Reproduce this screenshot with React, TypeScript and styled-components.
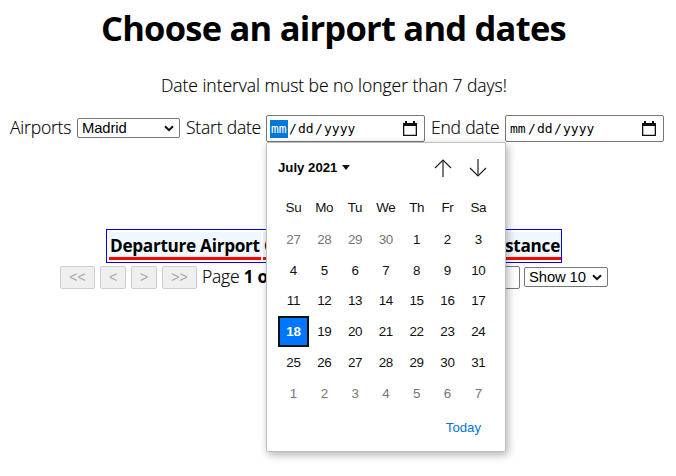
import React from "react";
import styled, { createGlobalStyle } from "styled-components";

const GlobalStyle = createGlobalStyle`
  * { box-sizing: border-box; }
  body {
    margin: 0;
    background: #fff;
    color: #000;
    font-family: "Open Sans", "Noto Sans", sans-serif;
    font-size: 17.5px;
    font-weight: 300;
    -webkit-text-stroke: 0.15px currentColor;
    overflow: hidden;
  }
`;

const Page = styled.main`
  width: 676px;
  height: 476px;
  overflow: hidden;
  white-space: nowrap;
`;

const Title = styled.h1`
  margin: 0;
  padding-left: 101px;
  height: 57px;
  font-size: 34.5px;
  line-height: 55px;
  font-weight: 700;
  letter-spacing: -0.77px;
  -webkit-text-stroke: 0;
`;

const Notice = styled.p`
  margin: 0;
  padding: 15px 0 0 161px;
  height: 58px;
  line-height: 27px;
  letter-spacing: -0.04px;
`;

const FilterRow = styled.div`
  display: flex;
  align-items: flex-start;
  height: 114px;
  padding-left: 10px;
`;

const Label = styled.span<{ $width: number; $indent?: number }>`
  flex: none;
  width: ${(p) => p.$width}px;
  padding-left: ${(p) => p.$indent ?? 0}px;
  line-height: 24px;
  letter-spacing: -0.2px;
`;

const SelectBox = styled.div<{ $width: number; $top: number }>`
  flex: none;
  display: flex;
  align-items: center;
  justify-content: space-between;
  width: ${(p) => p.$width}px;
  height: 20px;
  margin: ${(p) => p.$top}px 6px 0 0;
  padding: 0 5px 0 4px;
  border: 1px solid #767676;
  border-radius: 2px;
  background: #fff;
  font: 14.8px "Liberation Sans", Arial, sans-serif;
  line-height: 18px;
  letter-spacing: -0.1px;
  -webkit-text-stroke: 0;
`;

const DateField = styled.div`
  position: relative;
  flex: none;
  display: flex;
  align-items: center;
  justify-content: space-between;
  width: 159px;
  height: 27px;
  padding: 0 7px 0 3px;
  border: 1px solid #767676;
  border-radius: 2px;
  background: #fff;
  font: 13px "DejaVu Sans Mono", "Liberation Mono", monospace;
  -webkit-text-stroke: 0;
`;

const DateParts = styled.span`
  display: flex;
  line-height: 18px;
`;

const Part = styled.span<{ $active?: boolean; $width: number }>`
  width: ${(p) => p.$width}px;
  padding-left: 1px;
  background: ${(p) => (p.$active ? "#0078d7" : "transparent")};
  color: ${(p) => (p.$active ? "#fff" : "#000")};
`;

const Popup = styled.section`
  position: absolute;
  z-index: 2;
  left: -1px;
  top: 26px;
  width: 240px;
  height: 310px;
  padding: 0 11px;
  border: 1px solid #bfbfbf;
  border-radius: 2px;
  background: #fff;
  box-shadow: 2px 3px 8px rgba(0, 0, 0, 0.3);
  font: 14px "Liberation Sans", Arial, sans-serif;
`;

const PopupHead = styled.header`
  display: flex;
  align-items: center;
  height: 49px;
  font-size: 13.2px;
  font-weight: 700;

  svg { display: block; flex: none; }
`;

const Month = styled.span`
  flex: none;
  display: flex;
  align-items: center;
  gap: 5px;
  width: 156px;
`;

const Arrow = styled.span`
  flex: none;
  width: 35px;
  padding-top: 1px;
`;

const Week = styled.div<{ $height: number }>`
  display: grid;
  grid-template-columns: repeat(7, 30.8px);
  height: ${(p) => p.$height}px;
`;

const Day = styled.span<{ $muted?: boolean; $selected?: boolean }>`
  display: flex;
  align-items: center;
  justify-content: center;
  height: 30.8px;
  color: ${(p) => (p.$selected ? "#fff" : p.$muted ? "#767676" : "#101010")};
  background: ${(p) => (p.$selected ? "#0075ff" : "transparent")};
  border: ${(p) => (p.$selected ? "2px solid #101010" : "0")};
  font-weight: ${(p) => (p.$selected ? 700 : 400)};
  font-size: 13.4px;
  line-height: 15px;
  letter-spacing: -0.4px;
`;

const Today = styled.div`
  padding: 0 13px 0 0;
  color: #0078d7;
  font-size: 13.2px;
  line-height: 38px;
  text-align: right;
`;

const ResultTable = styled.div`
  display: flex;
  gap: 2px;
  width: 456px;
  height: 34px;
  margin-left: 106px;
  padding: 2px;
  border: 1px solid #0000f0;
  -webkit-text-stroke: 0;
`;

const HeadCell = styled.div<{ $width: number; $end?: boolean }>`
  flex: none;
  width: ${(p) => p.$width}px;
  height: 28px;
  padding: 0 1px;
  border-bottom: 3px solid #f00;
  background: #f0f8ff;
  font-weight: 700;
  font-size: 17.2px;
  line-height: 28px;
  letter-spacing: -0.3px;
  text-align: ${(p) => (p.$end ? "right" : "left")};
  overflow: hidden;
`;

const Pager = styled.div`
  display: flex;
  align-items: flex-start;
  padding: 3px 0 0 60px;
`;

const PageButton = styled.button<{ $width: number }>`
  flex: none;
  width: ${(p) => p.$width}px;
  height: 23px;
  margin: 0 5px 0 0;
  padding: 0;
  border: 1px solid #cfcfcf;
  border-radius: 2px;
  background: #efefef;
  color: #aaa;
  font: 14px "Liberation Sans", Arial, sans-serif;
  line-height: 19px;
  -webkit-text-stroke: 0;
`;

const PageStatus = styled.span`
  width: 160px;
  line-height: 20px;
  letter-spacing: -0.2px;

  b { font-size: 17px; font-weight: 700; -webkit-text-stroke: 0; }
`;

const PageInput = styled.div`
  width: 158px;
  height: 23px;
  margin-right: 4px;
  border: 1px solid #767676;
  border-radius: 2px;
`;

const Chevron = () => (
  <svg width="10" height="7" viewBox="0 0 10 7" fill="none" stroke="#101010" strokeWidth="2">
    <path d="M1 1.2 5 5.2 9 1.2" />
  </svg>
);

const CalendarIcon = () => (
  <svg width="14" height="16" viewBox="0 0 14 16">
    <path d="M2 0h2v2h6V0h2v2h2v13H0V2h2zM1.3 5v8.7h11.4V5z" fill="#101010" fillRule="evenodd" />
  </svg>
);

const ArrowIcon = ({ down = false }: { down?: boolean }) => (
  <svg width="18" height="18" viewBox="0 0 18 18" fill="none" stroke="#202020" strokeWidth="1.2">
    <path d={down ? "M1 9l8 8 8-8" : "M1 9l8-8 8 8"} />
    <path d={down ? "M9 0v17" : "M9 1v17"} />
  </svg>
);

const dayNames = ["Su", "Mo", "Tu", "We", "Th", "Fr", "Sa"];
const weeks = Array.from({ length: 6 }, (_, w) =>
  Array.from({ length: 7 }, (_, d) => {
    const n = w * 7 + d - 3;
    return { date: n < 1 ? n + 30 : n > 31 ? n - 31 : n, muted: n < 1 || n > 31 };
  })
);

const Calendar = () => (
  <Popup>
    <PopupHead>
      <Month>
        July 2021
        <svg width="8" height="5" viewBox="0 0 8 5"><path d="M0 0h8L4 5z" fill="#101010" /></svg>
      </Month>
      <Arrow><ArrowIcon /></Arrow>
      <Arrow><ArrowIcon down /></Arrow>
    </PopupHead>
    <Week $height={32}>
      {dayNames.map((d) => <Day key={d}>{d}</Day>)}
    </Week>
    {weeks.map((week, i) => (
      <Week key={i} $height={30.8}>
        {week.map(({ date, muted }) => (
          <Day key={date} $muted={muted} $selected={date === 18}>{date}</Day>
        ))}
      </Week>
    ))}
    <Today>Today</Today>
  </Popup>
);

const DateInput = ({ open = false }: { open?: boolean }) => (
  <DateField>
    <DateParts>
      <Part $width={18} $active={open}>mm</Part>
      <Part $width={9}>/</Part>
      <Part $width={17}>dd</Part>
      <Part $width={9}>/</Part>
      <Part $width={36}>yyyy</Part>
    </DateParts>
    <CalendarIcon />
    {open && <Calendar />}
  </DateField>
);

export default function App() {
  return (
    <Page>
      <GlobalStyle />
      <Title>Choose an airport and dates</Title>
      <Notice>Date interval must be no longer than 7 days!</Notice>
      <FilterRow>
        <Label $width={67}>Airports</Label>
        <SelectBox $width={103} $top={3}>Madrid <Chevron /></SelectBox>
        <Label $width={80}>Start date</Label>
        <DateInput open />
        <Label $width={80} $indent={6}>End date</Label>
        <DateInput />
      </FilterRow>
      <ResultTable>
        <HeadCell $width={152}>Departure Airport</HeadCell>
        <HeadCell $width={146}>Carrier</HeadCell>
        <HeadCell $width={150} $end>Distance</HeadCell>
      </ResultTable>
      <Pager>
        <PageButton $width={35}>&lt;&lt;</PageButton>
        <PageButton $width={26}>&lt;</PageButton>
        <PageButton $width={26}>&gt;</PageButton>
        <PageButton $width={35}>&gt;&gt;</PageButton>
        <PageStatus>Page <b>1 of 1</b></PageStatus>
        <PageInput />
        <SelectBox $width={84} $top={1}>Show 10 <Chevron /></SelectBox>
      </Pager>
    </Page>
  );
}
